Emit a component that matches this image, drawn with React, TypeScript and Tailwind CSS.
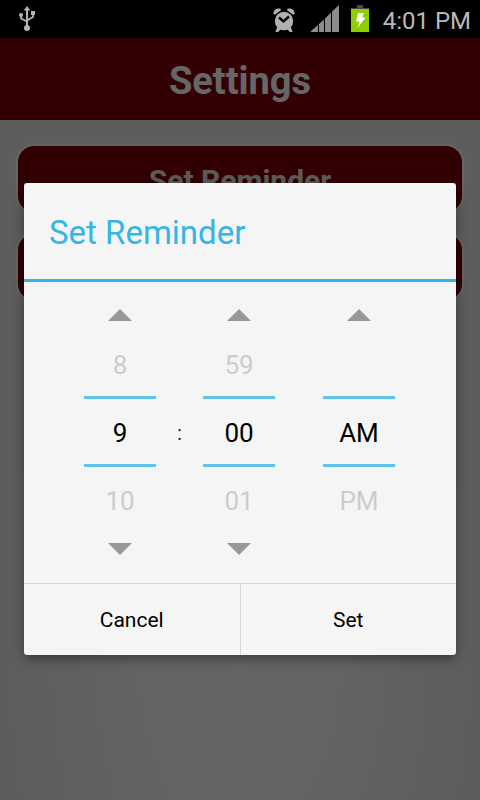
import { useState } from "react";

const Arrow: React.FC<{ down?: boolean }> = ({ down }) => (
  <svg width="24" height="12" viewBox="0 0 24 12" fill="#999999" aria-hidden="true">
    {down ? <path d="M0 0H24L12 12Z" /> : <path d="M12 0L24 12H0Z" />}
  </svg>
);

const UsbIcon: React.FC = () => (
  <svg width="16" height="26" viewBox="0 0 16 26" fill="#b4b4b4" aria-hidden="true">
    <path d="M8 0L11.4 4.5H4.6Z" />
    <path d="M8 3V21" stroke="#b4b4b4" strokeWidth="2" />
    <path d="M2 9V12.5L8 15.5M14 8V11L8 14.5" fill="none" stroke="#b4b4b4" strokeWidth="1.8" />
    <circle cx="2" cy="9" r="2" />
    <rect x="12" y="5" width="4" height="4" />
    <circle cx="8" cy="22" r="3" />
  </svg>
);

const AlarmIcon: React.FC = () => (
  <svg width="22" height="24" viewBox="0 0 22 24" aria-hidden="true">
    <g fill="#b0b0b0">
      <circle cx="11" cy="13" r="9.2" />
      <path d="M0.5 6C-0.2 2.6 3.6-0.8 7.4 0.8L8 2.2L1.8 6.8Z" />
      <path d="M21.5 6C22.2 2.6 18.4-0.8 14.6 0.8L14 2.2L20.2 6.8Z" />
      <path d="M4.2 19L2.4 24H5.2L8 21Z" />
      <path d="M17.8 19L19.6 24H16.8L14 21Z" />
    </g>
    <path d="M6 9.5L10.5 13.5L16 8.5" fill="none" stroke="#000" strokeWidth="2.4" />
  </svg>
);

const SignalIcon: React.FC = () => (
  <svg width="28" height="27" viewBox="0 0 28 27" fill="#8c8c8c" aria-hidden="true">
    <path d="M0 27V26L7 20V27Z" />
    <path d="M8 27V19L13 14.5V27Z" />
    <path d="M14 27V13.5L20 7.5V27Z" />
    <path d="M21 27V6.5L28 0V27Z" />
  </svg>
);

const BatteryIcon: React.FC = () => (
  <svg width="18" height="27" viewBox="0 0 18 27" aria-hidden="true">
    <rect x="6" y="0" width="6" height="3" fill="#4a4a4a" />
    <rect x="0" y="3" width="18" height="1" fill="#4a4a4a" />
    <rect x="0" y="4" width="18" height="23" fill="#8ecf00" />
    <path d="M7 8H13L11 12.5H14.5L6.5 23L8.5 16.5H5Z" fill="#ffffff" />
  </svg>
);

type PickerProps = {
  label: string;
  prev: string;
  value: string;
  next: string;
};

const Picker: React.FC<PickerProps> = ({ label, prev, value, next }) => {
  const [current, setCurrent] = useState(value);
  return (
    <div className="flex w-[72px] flex-col text-[26px] leading-8">
      <div className="flex h-[33px] items-center justify-center">
        <button type="button" aria-label={`Previous ${label}`}><Arrow /></button>
      </div>
      <div className="flex h-[65px] items-center justify-center pt-0.5 text-[#cccccc]">{prev}</div>
      <input
        aria-label={label}
        value={current}
        onChange={(e) => setCurrent(e.target.value)}
        className="h-[71px] w-full border-y-3 border-[#62c3ea] bg-transparent pt-0.5 text-center text-black outline-none"
      />
      <div className="flex h-[65px] items-center justify-center pt-0.5 text-[#cccccc]">{next}</div>
      <div className="flex h-[34px] items-center justify-center">
        {label !== "AM or PM" && (
          <button type="button" aria-label={`Next ${label}`}><Arrow down /></button>
        )}
      </div>
    </div>
  );
};

const App: React.FC = () => {
  return (
    <div className="relative flex min-h-screen flex-col bg-black font-['Roboto',sans-serif]">
      <div className="flex h-[38px] items-center pb-px pl-[19px] pr-[9px] text-[#b9b9b9]">
        <UsbIcon />
        <div className="ml-auto flex items-center">
          <div className="pt-0.5"><AlarmIcon /></div>
          <div className="ml-4"><SignalIcon /></div>
          <div className="ml-3"><BatteryIcon /></div>
          <span className="ml-3.5 pt-1 text-2xl">4:01 PM</span>
        </div>
      </div>

      <div className="relative flex flex-1 flex-col">
        <header className="flex h-[82px] items-center justify-center bg-[#7d0008]">
          <h1 className="pt-1 text-[38px] font-bold leading-10 text-white">Settings</h1>
        </header>
        <main className="flex flex-1 flex-col gap-[22px] bg-[radial-gradient(ellipse_at_50%_75%,#fcfcfc_0%,#f8f8f8_30%,#e8e8e8_70%)] px-[18px] pt-[26px]">
          <button type="button" className="h-[66px] rounded-2xl bg-[#7d0008] pt-1 text-[30px] font-bold leading-9 text-[#e8e4dc] shadow-[0_0_2px_2px_#ffffff]">
            Set Reminder
          </button>
          <button type="button" aria-label="More settings" className="h-[66px] rounded-2xl bg-[#7d0008] shadow-[0_0_2px_2px_#ffffff]" />
        </main>

        <div className="absolute inset-0 flex items-center justify-center bg-black/60 px-6">
          <div role="dialog" aria-labelledby="dialog-title" className="w-full rounded-[3px] bg-[#f5f5f5] shadow-[0_4px_12px_rgba(0,0,0,0.4)]">
            <h2 id="dialog-title" className="flex h-[99px] items-center border-b-3 border-[#33b5e5] pl-[25px] pt-1 text-[33px] leading-10 text-[#33b5e5]">
              Set Reminder
            </h2>
            <div className="flex justify-center pb-[17px] pr-px pt-4">
              <Picker label="hour" prev="8" value="9" next="10" />
              <span className="flex w-[47px] items-center justify-center pt-1 text-[21px] text-[#333333]">:</span>
              <Picker label="minute" prev="59" value="00" next="01" />
              <div className="w-12" />
              <Picker label="AM or PM" prev="" value="AM" next="PM" />
            </div>
            <div className="flex h-[72px] border-t border-[#d6d6d6] text-[21px] text-black">
              <button type="button" className="flex-1 border-r border-[#d6d6d6] pt-0.5">Cancel</button>
              <button type="button" className="flex-1 pt-0.5">Set</button>
            </div>
          </div>
        </div>
      </div>
    </div>
  );
};

export default App;
